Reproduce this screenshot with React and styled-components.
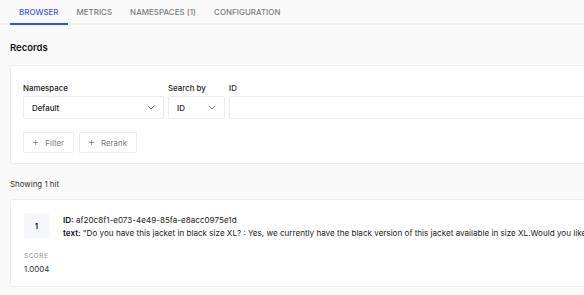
import React from "react";
import styled, { createGlobalStyle } from "styled-components";

const Global = createGlobalStyle`
  html, body { margin: 0; padding: 0; background: #f9f9f9; overflow: hidden; }
  body { font-family: Inter, "Noto Sans", sans-serif; color: #1f1f1f; }
  * { box-sizing: border-box; }
`;

const Page = styled.div`
  width: 900px;
  display: flex;
  flex-direction: column;
`;

const TabBar = styled.div`
  display: flex;
  padding-left: 10px;
  height: 25px;
  border-bottom: 2px solid #efefef;
`;

const Tab = styled.div`
  padding: 0 9px;
  height: 23px;
  display: flex;
  align-items: center;
  font-size: 7.9px;
  font-weight: 500;
  letter-spacing: 0.05px;
  color: ${(p) => (p.$active ? "#3b55ff" : "#7c7c7c")};
  border-bottom: 2px solid ${(p) => (p.$active ? "#2f4bff" : "transparent")};
  box-sizing: content-box;
`;

const Content = styled.div`
  padding: 16px 10px 0 10px;
  display: flex;
  flex-direction: column;
`;

const Title = styled.div`
  font-size: 9.5px;
  font-weight: 600;
  color: #111;
  height: 14px;
  line-height: 14px;
`;

const Card = styled.div`
  margin-top: ${(p) => p.$mt};
  background: #fff;
  border: 1px solid #ececec;
  border-radius: 2px;
  padding: ${(p) => p.$pad};
`;

const Fields = styled.div`
  display: flex;
  gap: 4px;
`;

const Field = styled.div`
  display: flex;
  flex-direction: column;
  gap: 2px;
  width: ${(p) => p.$w};
`;

const Label = styled.div`
  font-size: 7.9px;
  font-weight: 500;
  color: #222;
  height: 11px;
  line-height: 11px;
`;

const Select = styled.div`
  height: 23px;
  border: 1px solid #ececec;
  border-radius: 2px;
  display: flex;
  align-items: center;
  justify-content: space-between;
  padding: 0 8px 0 8px;
  font-size: 7.9px;
  font-weight: 500;
  color: #222;
`;

const Buttons = styled.div`
  display: flex;
  gap: 5px;
  margin-top: 13px;
`;

const Button = styled.div`
  height: 21px;
  border: 1px solid #ececec;
  border-radius: 2px;
  display: flex;
  align-items: center;
  gap: 7px;
  padding: 0 9px;
  font-size: 7.9px;
  color: #777;
  width: ${(p) => p.$w};
`;

const Hits = styled.div`
  margin-top: 14px;
  font-size: 7.9px;
  color: #333;
  height: 12px;
  line-height: 12px;
`;

const Result = styled.div`
  display: flex;
  gap: 14px;
`;

const Left = styled.div`
  display: flex;
  flex-direction: column;
  width: 25px;
`;

const Rank = styled.div`
  width: 25px;
  height: 25px;
  background: #f6f7fb;
  display: flex;
  align-items: center;
  justify-content: center;
  font-size: 7.9px;
  font-weight: 600;
  color: #111;
`;

const ScoreLabel = styled.div`
  margin-top: 13px;
  font-size: 6.3px;
  letter-spacing: 0.6px;
  color: #8a8a8a;
  line-height: 10px;
`;

const ScoreValue = styled.div`
  margin-top: 2px;
  font-size: 7.9px;
  color: #333;
  line-height: 12px;
`;

const Lines = styled.div`
  display: flex;
  flex-direction: column;
  gap: 1px;
  padding-top: 1px;
  white-space: nowrap;
`;

const Line = styled.div`
  font-size: 8.1px;
  color: #222;
  line-height: 12px;
  b { font-weight: 600; color: #111; }
`;

const Chevron = () => (
  <svg width="8" height="5" viewBox="0 0 8 5" fill="none">
    <path d="M0.8 0.8 L4 4 L7.2 0.8" stroke="#666" strokeWidth="0.9" />
  </svg>
);

const Plus = () => (
  <svg width="7" height="7" viewBox="0 0 7 7">
    <path d="M3.5 0 V7 M0 3.5 H7" stroke="#777" strokeWidth="1" />
  </svg>
);

export default function App() {
  return (
    <Page>
      <Global />
      <TabBar>
        <Tab $active>BROWSER</Tab>
        <Tab>METRICS</Tab>
        <Tab>NAMESPACES (1)</Tab>
        <Tab>CONFIGURATION</Tab>
      </TabBar>
      <Content>
        <Title>Records</Title>
        <Card $mt="10px" $pad="17px 12px 10px 12px">
          <Fields>
            <Field $w="141px">
              <Label>Namespace</Label>
              <Select>Default<Chevron /></Select>
            </Field>
            <Field $w="57px">
              <Label>Search by</Label>
              <Select>ID<Chevron /></Select>
            </Field>
            <Field $w="500px">
              <Label>ID</Label>
              <Select />
            </Field>
          </Fields>
          <Buttons>
            <Button $w="51px"><Plus />Filter</Button>
            <Button $w="58px"><Plus />Rerank</Button>
          </Buttons>
        </Card>
        <Hits>Showing 1 hit</Hits>
        <Card $mt="9px" $pad="13px 13px 11px 13px">
          <Result>
            <Left>
              <Rank>1</Rank>
              <ScoreLabel>SCORE</ScoreLabel>
              <ScoreValue>1.0004</ScoreValue>
            </Left>
            <Lines>
              <Line><b>ID:</b> af20c8f1-e073-4e49-85fa-e8acc0975e1d</Line>
              <Line><b>text:</b> "Do you have this jacket in black size XL? : Yes, we currently have the black version of this jacket available in size XL.Would you like me to reserve one for you?"</Line>
            </Lines>
          </Result>
        </Card>
      </Content>
    </Page>
  );
}
